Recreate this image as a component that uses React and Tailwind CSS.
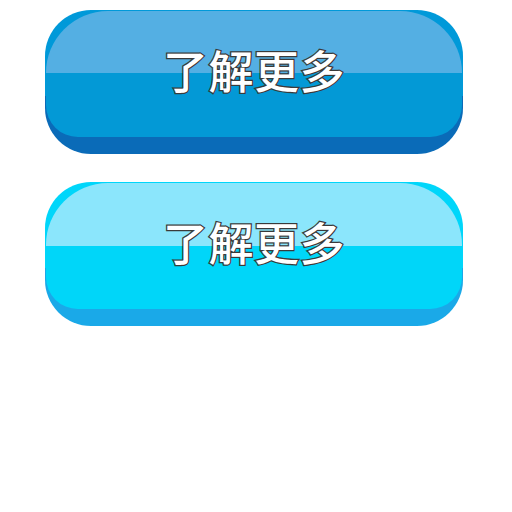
import React from 'react';

function GlossButton({ outer, face, label }) {
  return (
    <div className={`w-[418px] h-[144px] rounded-[46px] pt-[1px] px-[1px] ${outer}`}>
      <div
        className={`h-[126px] rounded-t-[62px] rounded-b-[32px] flex items-center justify-center pb-[10px] ${face}`}
      >
        <span className="text-[45px] leading-none font-medium text-white tracking-[0.5px] [font-family:'Noto_Sans_CJK_SC',sans-serif] [-webkit-text-stroke:2.5px_#3a3a3a] [paint-order:stroke_fill]">
          {label}
        </span>
      </div>
    </div>
  );
}

export default function App() {
  return (
    <div className="w-[512px] h-[512px] bg-white flex flex-col items-start pl-[45px] pt-[10px] gap-[28px]">
      <GlossButton
        outer="bg-[linear-gradient(to_bottom,#0099d9_0,#0099d9_60%,#0a6bb8_60%)]"
        face="bg-[linear-gradient(to_bottom,#54afe3_0,#54afe3_62px,#0399d6_62px)]"
        label="了解更多"
      />
      <GlossButton
        outer="bg-[linear-gradient(to_bottom,#00d6fa_0,#00d6fa_60%,#1aa9e8_60%)]"
        face="bg-[linear-gradient(to_bottom,#8be6fc_0,#8be6fc_63px,#00d6f9_63px)]"
        label="了解更多"
      />
    </div>
  );
}
